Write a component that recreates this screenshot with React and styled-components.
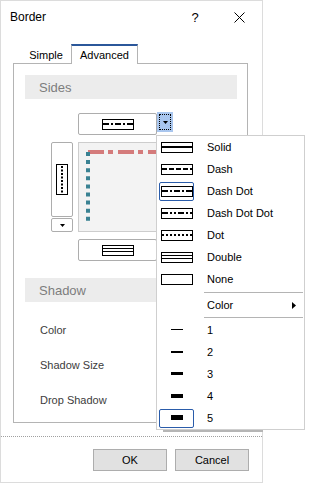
import React from 'react';
import styled, { createGlobalStyle } from 'styled-components';

const GlobalStyle = createGlobalStyle`
  body {
    margin: 0;
    background: #fff;
    font-family: 'Liberation Sans', Arial, sans-serif;
    color: #000;
  }
`;

const Page = styled.div`
  position: relative;
  width: 309px;
  height: 485px;
  background: #fff;
`;

const Dialog = styled.div`
  width: 263px;
  height: 483px;
  box-sizing: border-box;
  border: 1px solid #dcdcdc;
  display: flex;
  flex-direction: column;
  background: #fff;
`;

const TitleBar = styled.div`
  height: 32px;
  display: flex;
  align-items: center;
  padding: 0 8px 0 9px;
  font-size: 12px;
`;

const Title = styled.span`
  flex: 1;
`;

const TitleButton = styled.div`
  width: 30px;
  height: 24px;
  display: flex;
  align-items: center;
  justify-content: center;
  font-size: 13px;
  margin-left: ${(p) => p.gap || 0}px;
`;

const Body = styled.div`
  padding-left: 12px;
  margin-top: 11px;
`;

const TabRow = styled.div`
  display: flex;
  align-items: flex-end;
  height: 19px;
  margin-left: 8px;
`;

const Tab = styled.div`
  position: relative;
  z-index: 1;
  box-sizing: border-box;
  width: ${(p) => p.w}px;
  height: ${(p) => (p.active ? 20 : 17)}px;
  margin-bottom: ${(p) => (p.active ? -1 : 0)}px;
  display: flex;
  align-items: center;
  justify-content: center;
  padding-bottom: ${(p) => (p.active ? 1 : 0)}px;
  font-size: 11px;
  background: #fff;
  border-top: ${(p) => (p.active ? '2px solid #2b579a' : 'none')};
  border-left: ${(p) => (p.active ? '1px solid #b4b4b4' : 'none')};
  border-right: ${(p) => (p.active ? '1px solid #b4b4b4' : 'none')};
`;

const Panel = styled.div`
  width: 235px;
  height: 360px;
  box-sizing: border-box;
  border: 1px solid #b4b4b4;
  padding: 11px 10px 0 11px;
`;

const SectionHeader = styled.div`
  height: 24px;
  background: #ececec;
  color: #7d7d7d;
  font-size: 13px;
  display: flex;
  align-items: center;
  padding-left: 14px;
  margin-top: ${(p) => p.top || 0}px;
`;

const SidesGrid = styled.div`
  display: grid;
  grid-template-columns: 22px 106px;
  grid-template-rows: 22px 90px 22px;
  column-gap: 5px;
  row-gap: 7px;
  margin: 14px 0 0 26px;
`;

const ComboRow = styled.div`
  grid-column: 2;
  display: flex;
  align-items: flex-start;
`;

const StyleButton = styled.div`
  width: 79px;
  height: 22px;
  box-sizing: border-box;
  border: 1px solid #adadad;
  border-radius: 2px;
  background: #fff;
  display: flex;
  align-items: center;
  justify-content: center;
`;

const ArrowBox = styled.div`
  width: 16px;
  height: 20px;
  margin-top: -1px;
  box-sizing: border-box;
  background: #a9c6ee;
  padding: 2px;
  display: flex;
`;

const FocusRect = styled.div`
  flex: 1;
  border: 1px dotted #000;
  display: flex;
  align-items: center;
  justify-content: center;
`;

const SideColumn = styled.div`
  display: flex;
  flex-direction: column;
  gap: 1px;
`;

const VerticalButton = styled.div`
  height: 75px;
  box-sizing: border-box;
  border: 1px solid #adadad;
  border-radius: 2px;
  display: flex;
  align-items: center;
  justify-content: center;
`;

const SmallDrop = styled.div`
  height: 14px;
  box-sizing: border-box;
  border: 1px solid #adadad;
  border-radius: 2px;
  display: flex;
  align-items: center;
  justify-content: center;
`;

const Preview = styled.div`
  box-sizing: border-box;
  border: 1px solid #cdcdcd;
  background: #f3f3f3;
`;

const LabelRow = styled.div`
  height: 35px;
  display: flex;
  align-items: center;
  padding-left: 15px;
  font-size: 11px;
  color: #3c3c3c;
`;

const LabelList = styled.div`
  margin-top: 10px;
`;

const Footer = styled.div`
  margin-top: 13px;
  border-top: 1px dotted #a0a0a0;
  padding: 12px 13px 0 0;
  display: flex;
  justify-content: flex-end;
  gap: 8px;
`;

const Button = styled.div`
  width: 74px;
  height: 22px;
  box-sizing: border-box;
  border: 1px solid #adadad;
  background: #e1e1e1;
  font-size: 11px;
  display: flex;
  align-items: center;
  justify-content: center;
`;

const Menu = styled.div`
  position: absolute;
  left: 156px;
  top: 135px;
  width: 149px;
  box-sizing: border-box;
  border: 1px solid #cfcfcf;
  background: #fff;
  z-index: 5;

  &::after {
    content: '';
    position: absolute;
    left: 6px;
    bottom: -3px;
    width: 100px;
    height: 2px;
    background: #b5b5b5;
  }
`;

const MenuItem = styled.div`
  height: 22px;
  display: flex;
  align-items: center;
  font-size: 11px;
`;

const IconCell = styled.div`
  width: 35px;
  height: 19px;
  margin-left: 2px;
  box-sizing: border-box;
  border: 1px solid ${(p) => (p.active ? '#2a5caa' : 'transparent')};
  border-radius: 2px;
  display: flex;
  align-items: center;
  justify-content: center;
`;

const ItemLabel = styled.span`
  margin-left: 13px;
`;

const SubArrow = styled.span`
  margin-left: auto;
  margin-right: 8px;
  display: flex;
`;

const Separator = styled.div`
  height: 1px;
  background: #b4b4b4;
  margin: ${(p) => p.top}px 1px 1px 47px;
`;

const dashes = {
  solid: null,
  dash: '5 2',
  dashDot: '6 2 2 2',
  dashDotDot: '6 2 2 2 2 2',
  dot: '2 2',
};

const LineIcon = ({ kind }) => (
  <svg width="32" height="11" viewBox="0 0 32 11">
    <rect x="0.5" y="0.5" width="31" height="10" fill="#fff" stroke="#000" />
    {kind === 'double' && (
      <>
        <line x1="1" x2="31" y1="3.5" y2="3.5" stroke="#000" />
        <line x1="1" x2="31" y1="6.5" y2="6.5" stroke="#000" />
      </>
    )}
    {kind in dashes && (
      <line
        x1="1"
        x2="31"
        y1="5"
        y2="5"
        stroke="#000"
        strokeWidth="2"
        strokeDasharray={dashes[kind] || undefined}
      />
    )}
  </svg>
);

const VerticalIcon = () => (
  <svg width="12" height="31" viewBox="0 0 12 31">
    <rect x="0.5" y="0.5" width="11" height="30" fill="#fff" stroke="#000" />
    <line x1="6" x2="6" y1="2" y2="29" stroke="#000" strokeWidth="2" strokeDasharray="2 1.5" />
  </svg>
);

const DownArrow = () => (
  <svg width="5" height="3" viewBox="0 0 5 3">
    <polygon points="0,0 5,0 2.5,3" fill="#000" />
  </svg>
);

const RightArrow = () => (
  <svg width="4" height="7" viewBox="0 0 4 7">
    <polygon points="0,0 4,3.5 0,7" fill="#000" />
  </svg>
);

const Weight = ({ size }) => (
  <svg width="12" height="6" viewBox="0 0 12 6">
    <rect x="0" y={Math.floor((6 - size) / 2)} width="12" height={size} fill="#000" />
  </svg>
);

const CloseIcon = () => (
  <svg width="11" height="11" viewBox="0 0 11 11">
    <path d="M0.5 0.5 L10.5 10.5 M10.5 0.5 L0.5 10.5" stroke="#000" strokeWidth="1" />
  </svg>
);

const PreviewLines = () => (
  <svg width="104" height="88" viewBox="0 0 104 88">
    <line x1="9" x2="104" y1="9" y2="9" stroke="#d47b7b" strokeWidth="4" strokeDasharray="16 4 5 5" />
    <line x1="9" x2="9" y1="9" y2="78" stroke="#3a8293" strokeWidth="4" strokeDasharray="4 4.1" />
  </svg>
);

const styleItems = [
  { kind: 'solid', label: 'Solid' },
  { kind: 'dash', label: 'Dash' },
  { kind: 'dashDot', label: 'Dash Dot', active: true },
  { kind: 'dashDotDot', label: 'Dash Dot Dot' },
  { kind: 'dot', label: 'Dot' },
  { kind: 'double', label: 'Double' },
  { kind: 'none', label: 'None' },
];

const weights = [1, 2, 3, 4, 5];

const App = () => {
  return (
    <Page>
      <GlobalStyle />
      <Dialog>
        <TitleBar>
          <Title>Border</Title>
          <TitleButton>?</TitleButton>
          <TitleButton gap={14}>
            <CloseIcon />
          </TitleButton>
        </TitleBar>
        <Body>
          <TabRow>
            <Tab w={50}>Simple</Tab>
            <Tab w={67} active>
              Advanced
            </Tab>
          </TabRow>
          <Panel>
            <SectionHeader>Sides</SectionHeader>
            <SidesGrid>
              <ComboRow>
                <StyleButton>
                  <LineIcon kind="dashDot" />
                </StyleButton>
                <ArrowBox>
                  <FocusRect>
                    <DownArrow />
                  </FocusRect>
                </ArrowBox>
              </ComboRow>
              <SideColumn>
                <VerticalButton>
                  <VerticalIcon />
                </VerticalButton>
                <SmallDrop>
                  <DownArrow />
                </SmallDrop>
              </SideColumn>
              <Preview>
                <PreviewLines />
              </Preview>
              <ComboRow>
                <StyleButton>
                  <LineIcon kind="double" />
                </StyleButton>
              </ComboRow>
            </SidesGrid>
            <SectionHeader top={17}>Shadow</SectionHeader>
            <LabelList>
              <LabelRow>Color</LabelRow>
              <LabelRow>Shadow Size</LabelRow>
              <LabelRow>Drop Shadow</LabelRow>
            </LabelList>
          </Panel>
        </Body>
        <Footer>
          <Button>OK</Button>
          <Button>Cancel</Button>
        </Footer>
      </Dialog>

      <Menu>
        {styleItems.map((item) => (
          <MenuItem key={item.kind}>
            <IconCell active={item.active}>
              <LineIcon kind={item.kind} />
            </IconCell>
            <ItemLabel>{item.label}</ItemLabel>
          </MenuItem>
        ))}
        <Separator top={2} />
        <MenuItem>
          <IconCell />
          <ItemLabel>Color</ItemLabel>
          <SubArrow>
            <RightArrow />
          </SubArrow>
        </MenuItem>
        <Separator top={1} />
        {weights.map((w) => (
          <MenuItem key={w}>
            <IconCell active={w === 5}>
              <Weight size={w} />
            </IconCell>
            <ItemLabel>{w}</ItemLabel>
          </MenuItem>
        ))}
      </Menu>
    </Page>
  );
};

export default App;
